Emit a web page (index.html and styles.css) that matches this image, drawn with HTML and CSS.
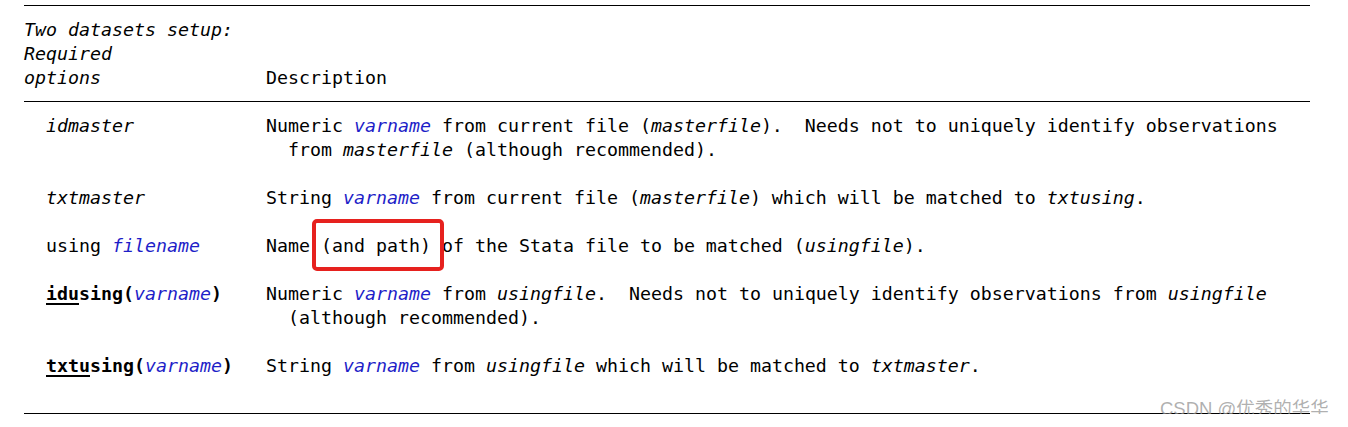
FILE: index.html
```html
<!DOCTYPE html>
<html>
<head>
<meta charset="utf-8">
<link rel="stylesheet" href="styles.css">
</head>
<body>
<div class="doc">
  <div class="head">
    <div class="col1">
      <div class="line it">Two datasets setup:</div>
      <div class="line it">Required</div>
      <div class="line it">options</div>
    </div>
    <div class="col2 bottom">
      <div class="line">Description</div>
    </div>
  </div>
  <div class="body">
    <div class="entry">
      <div class="opt"><span class="it">idmaster</span></div>
      <div class="desc">
        <div class="line">Numeric <span class="var">varname</span> from current file (<span class="it">masterfile</span>).  Needs not to uniquely identify observations</div>
        <div class="line cont">from <span class="it">masterfile</span> (although recommended).</div>
      </div>
    </div>
    <div class="entry">
      <div class="opt"><span class="it">txtmaster</span></div>
      <div class="desc">
        <div class="line">String <span class="var">varname</span> from current file (<span class="it">masterfile</span>) which will be matched to <span class="it">txtusing</span>.</div>
      </div>
    </div>
    <div class="entry">
      <div class="opt">using <span class="var">filename</span></div>
      <div class="desc">
        <div class="line">Name <span class="mark">(and path)<span class="mark-box"></span></span> of the Stata file to be matched (<span class="it">usingfile</span>).</div>
      </div>
    </div>
    <div class="entry">
      <div class="opt"><b><u>idu</u>sing(</b><span class="var">varname</span><b>)</b></div>
      <div class="desc">
        <div class="line">Numeric <span class="var">varname</span> from <span class="it">usingfile</span>.  Needs not to uniquely identify observations from <span class="it">usingfile</span></div>
        <div class="line cont">(although recommended).</div>
      </div>
    </div>
    <div class="entry">
      <div class="opt"><b><u>txtu</u>sing(</b><span class="var">varname</span><b>)</b></div>
      <div class="desc">
        <div class="line">String <span class="var">varname</span> from <span class="it">usingfile</span> which will be matched to <span class="it">txtmaster</span>.</div>
      </div>
    </div>
  </div>
  <div class="watermark">CSDN @优秀的华华</div>
</div>
</body>
</html>
```

FILE: styles.css
```css
html, body {
  margin: 0;
  padding: 0;
  background: #ffffff;
}

body {
  padding-top: 5px;
  padding-left: 24px;
}

.doc {
  position: relative;
  width: 1286px;
  height: 409px;
  font-family: "DejaVu Sans Mono", "Liberation Mono", monospace;
  font-size: 18.27px;
  line-height: 24px;
  color: #000;
  border-top: 1px solid #000;
  border-bottom: 1px solid #000;
  box-sizing: border-box;
}

.line {
  white-space: pre;
  height: 24px;
}

.it {
  font-style: italic;
}

.var {
  font-style: italic;
  color: #1e1ec8;
}

b {
  font-weight: bold;
}

u {
  text-decoration-thickness: 2px;
  text-underline-offset: 3px;
}

.head {
  display: grid;
  grid-template-columns: 242px 1fr;
  padding: 12px 0 11px 0;
  border-bottom: 1px solid #000;
}

.col2.bottom {
  display: flex;
  flex-direction: column;
  justify-content: flex-end;
}

.body {
  display: flex;
  flex-direction: column;
  gap: 24px;
  padding-top: 12px;
}

.entry {
  display: grid;
  grid-template-columns: 242px 1fr;
}

.opt {
  padding-left: 22px;
  white-space: pre;
  height: 24px;
}

.cont {
  padding-left: 22px;
}

.mark {
  position: relative;
}

.mark-box {
  position: absolute;
  left: -9px;
  right: -13px;
  top: -16px;
  bottom: -15px;
  border: 4px solid #e6211e;
  border-radius: 5px;
}

.watermark {
  position: absolute;
  left: 1136px;
  top: 392px;
  font-family: "Liberation Sans", "Noto Sans CJK SC", sans-serif;
  font-size: 18.5px;
  line-height: 22px;
  color: rgba(150, 150, 150, 0.75);
  white-space: nowrap;
}
```
